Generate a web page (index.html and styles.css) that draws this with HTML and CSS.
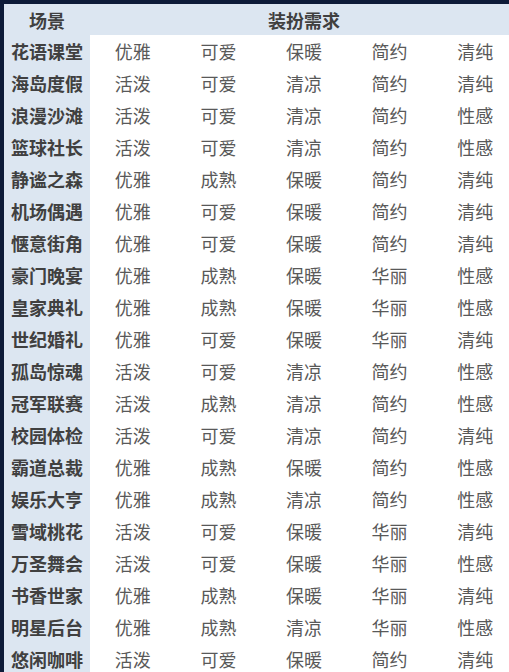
FILE: index.html
```html
<!DOCTYPE html>
<html lang="zh-CN">
<head>
<meta charset="utf-8">
<title>场景装扮需求</title>
<link rel="stylesheet" href="styles.css">
</head>
<body>
<div class="frame">
<table class="sheet">
<colgroup><col class="c-scene"><col class="c-val"><col class="c-val"><col class="c-val"><col class="c-val"><col class="c-val"></colgroup>
<thead>
<tr><th class="scene">场景</th><th colspan="5">装扮需求</th></tr>
</thead>
<tbody>
<tr><th class="scene">花语课堂</th><td>优雅</td><td>可爱</td><td>保暖</td><td>简约</td><td>清纯</td></tr>
<tr><th class="scene">海岛度假</th><td>活泼</td><td>可爱</td><td>清凉</td><td>简约</td><td>清纯</td></tr>
<tr><th class="scene">浪漫沙滩</th><td>活泼</td><td>可爱</td><td>清凉</td><td>简约</td><td>性感</td></tr>
<tr><th class="scene">篮球社长</th><td>活泼</td><td>可爱</td><td>清凉</td><td>简约</td><td>性感</td></tr>
<tr><th class="scene">静谧之森</th><td>优雅</td><td>成熟</td><td>保暖</td><td>简约</td><td>清纯</td></tr>
<tr><th class="scene">机场偶遇</th><td>优雅</td><td>可爱</td><td>保暖</td><td>简约</td><td>清纯</td></tr>
<tr><th class="scene">惬意街角</th><td>优雅</td><td>可爱</td><td>保暖</td><td>简约</td><td>清纯</td></tr>
<tr><th class="scene">豪门晚宴</th><td>优雅</td><td>成熟</td><td>保暖</td><td>华丽</td><td>性感</td></tr>
<tr><th class="scene">皇家典礼</th><td>优雅</td><td>成熟</td><td>保暖</td><td>华丽</td><td>性感</td></tr>
<tr><th class="scene">世纪婚礼</th><td>优雅</td><td>可爱</td><td>保暖</td><td>华丽</td><td>清纯</td></tr>
<tr><th class="scene">孤岛惊魂</th><td>活泼</td><td>可爱</td><td>清凉</td><td>简约</td><td>性感</td></tr>
<tr><th class="scene">冠军联赛</th><td>活泼</td><td>成熟</td><td>清凉</td><td>简约</td><td>性感</td></tr>
<tr><th class="scene">校园体检</th><td>活泼</td><td>可爱</td><td>清凉</td><td>简约</td><td>清纯</td></tr>
<tr><th class="scene">霸道总裁</th><td>优雅</td><td>成熟</td><td>保暖</td><td>简约</td><td>性感</td></tr>
<tr><th class="scene">娱乐大亨</th><td>优雅</td><td>成熟</td><td>清凉</td><td>简约</td><td>性感</td></tr>
<tr><th class="scene">雪域桃花</th><td>活泼</td><td>可爱</td><td>保暖</td><td>华丽</td><td>清纯</td></tr>
<tr><th class="scene">万圣舞会</th><td>活泼</td><td>可爱</td><td>保暖</td><td>华丽</td><td>性感</td></tr>
<tr><th class="scene">书香世家</th><td>优雅</td><td>成熟</td><td>保暖</td><td>华丽</td><td>清纯</td></tr>
<tr><th class="scene">明星后台</th><td>优雅</td><td>成熟</td><td>清凉</td><td>华丽</td><td>性感</td></tr>
<tr><th class="scene">悠闲咖啡</th><td>活泼</td><td>可爱</td><td>保暖</td><td>简约</td><td>清纯</td></tr>
</tbody>
</table>
</div>
</body>
</html>
```
FILE: styles.css
```css
html, body {
  margin: 0;
  padding: 0;
  background: #ffffff;
}
body {
  width: 509px;
  height: 672px;
  overflow: hidden;
}
.frame {
  border-top: 4px solid #0d1b38;
  border-left: 4px solid #0d1b38;
  width: 520px;
}
.sheet {
  border-collapse: collapse;
  table-layout: fixed;
  width: 514px;
  font-family: "Noto Sans CJK SC", "Noto Sans", sans-serif;
  font-size: 18px;
}
.c-scene { width: 86px; }
.c-val { width: 85.6px; }
.sheet th, .sheet td {
  padding: 0;
  text-align: center;
  vertical-align: middle;
  white-space: nowrap;
  line-height: 1;
}
.sheet thead th {
  height: 31px;
  background: #dce6f1;
  color: #404040;
  font-weight: bold;
}
.sheet tbody tr {
  height: 32px;
}
.sheet tbody th.scene {
  background: #dce6f1;
  color: #404040;
  font-weight: bold;
}
.sheet tbody td {
  color: #595959;
  font-weight: normal;
}
```
